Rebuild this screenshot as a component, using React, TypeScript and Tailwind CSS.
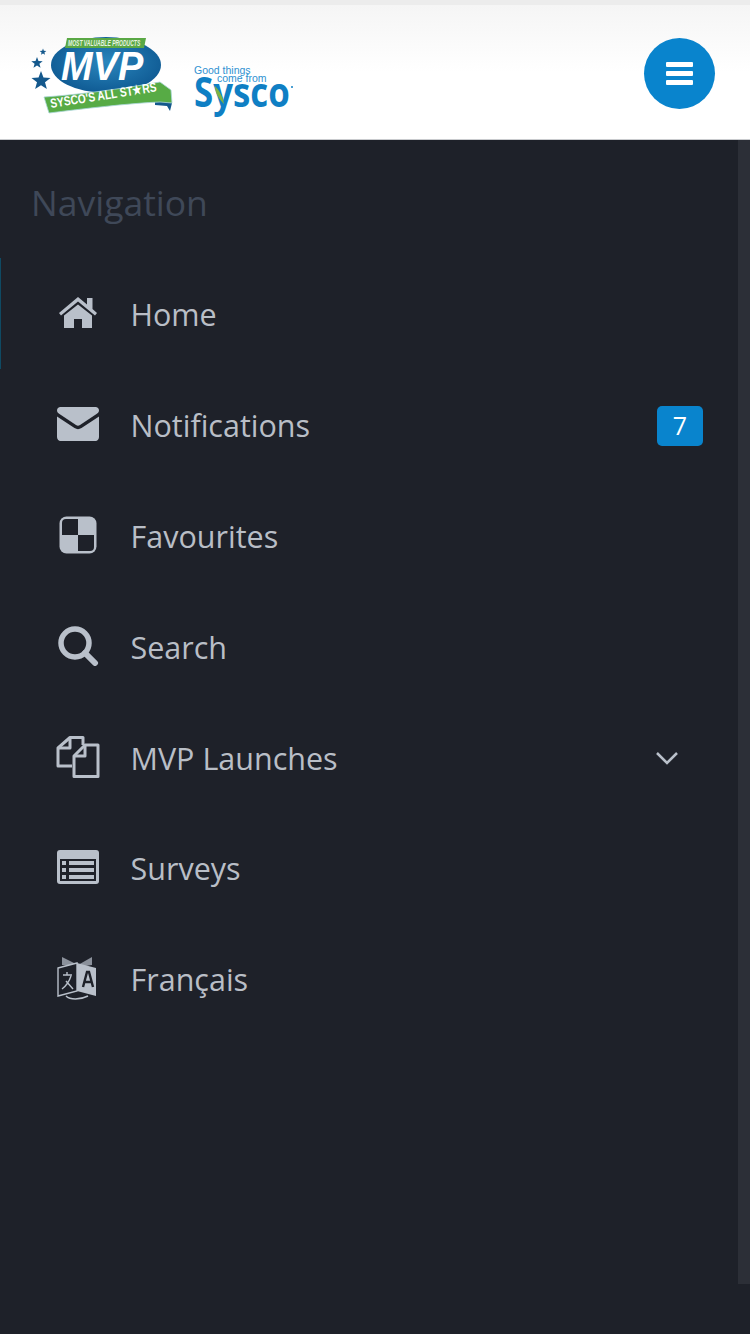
import React from "react";

const HomeIcon = () => (
  <svg width="44" height="36" viewBox="0 0 44 36" fill="#b9c0ca">
    <path d="M3 18 L22 2 L31 9.500 V3 H36.500 V14 L41 18 L39 20.500 L22 6.500 L5 20.500 Z" />
    <path d="M8 20.500 L22 9.500 L36 20.500 V33 H26 V24 H18 V33 H8 Z" />
  </svg>
);

const MailIcon = () => (
  <svg width="44" height="36" viewBox="0 0 44 36" fill="#b9c0ca">
    <path d="M1 4.500 C1 2.500 2.500 1 4.500 1 H39.500 C41.500 1 43 2.500 43 4.500 C43 6 42 7 40.500 8 L24 19 C22.700 19.900 21.300 19.900 20 19 L3.500 8 C2 7 1 6 1 4.500 Z" />
    <path d="M1 10.500 L18.500 22 C20.800 23.500 23.200 23.500 25.500 22 L43 10.500 V31 C43 33.200 41.500 35 39.500 35 H4.500 C2.500 35 1 33.200 1 31 Z" />
  </svg>
);

const TilesIcon = () => (
  <svg width="44" height="38" viewBox="0 0 44 38">
    <rect x="3.500" y="0.500" width="37" height="37" rx="7" fill="#b9c0ca" />
    <path d="M22 3 H10 Q6 3 6 7 V19 H22 Z" fill="#1e2129" />
    <path d="M22 19 H38 V31 Q38 35 34 35 H22 Z" fill="#1e2129" />
  </svg>
);

const SearchIcon = () => (
  <svg width="44" height="40" viewBox="0 0 44 40" fill="none" stroke="#b9c0ca">
    <circle cx="19" cy="17" r="14" strokeWidth="5.500" />
    <path d="M29 27 L39 37" strokeWidth="6" strokeLinecap="round" />
  </svg>
);

const PagesIcon = () => (
  <svg width="44" height="42" viewBox="0 0 44 42" fill="none" stroke="#b9c0ca" strokeWidth="3" strokeLinejoin="round">
    <path d="M16 30 H2 V12 L14 1.500 H27 V9" />
    <path d="M14 1.500 V12 H2" />
    <path d="M18 40.500 V20 L29 9 H42 V40.500 Z" />
    <path d="M29 9 V20 H18" />
  </svg>
);

const SurveyIcon = () => (
  <svg width="44" height="36" viewBox="0 0 44 36">
    <rect x="1" y="1" width="42" height="34" rx="3" fill="#b9c0ca" />
    <rect x="4" y="10" width="36" height="22" fill="#1e2129" />
    <rect x="6" y="12" width="4" height="4" fill="#b9c0ca" />
    <rect x="6" y="19" width="4" height="4" fill="#b9c0ca" />
    <rect x="6" y="26" width="4" height="4" fill="#b9c0ca" />
    <rect x="13" y="12" width="25" height="4" fill="#b9c0ca" />
    <rect x="13" y="19" width="25" height="4" fill="#b9c0ca" />
    <rect x="13" y="26" width="25" height="4" fill="#b9c0ca" />
  </svg>
);

const TranslateIcon = () => (
  <svg width="44" height="46" viewBox="0 0 44 46">
    <path d="M6 2 L22 10 L36 2 V10 L22 12 L6 10 Z" fill="#8b919b" />
    <path d="M2 13 L21 8 V36 L2 41 Z" fill="#1e2129" stroke="#b9c0ca" strokeWidth="1.400" />
    <path d="M21 8 L40 13 V41 L21 36 Z" fill="#b9c0ca" />
    <path d="M27 32 L31 17 H33 L37 32 M29 27 H35" fill="none" stroke="#1e2129" strokeWidth="2.400" />
    <path d="M7 20 H16 M11 17 V20 M15 21 C13 27 10 31 6 34 M10 26 L17 34" fill="none" stroke="#b9c0ca" strokeWidth="1.400" />
    <path d="M10 41 C14 45 24 45 32 41" fill="none" stroke="#b9c0ca" strokeWidth="1.400" />
  </svg>
);

const Star = ({ cx, cy, r }: { cx: number; cy: number; r: number }) => {
  const pts: string[] = [];
  for (let i = 0; i < 10; i++) {
    const rad = i % 2 === 0 ? r : r * 0.42;
    const a = -Math.PI / 2 + (i * Math.PI) / 5;
    pts.push(`${cx + rad * Math.cos(a)},${cy + rad * Math.sin(a)}`);
  }
  return <polygon points={pts.join(" ")} fill="#14588c" />;
};

const Logo = () => (
  <svg width="142" height="82" viewBox="0 0 142 82">
    <defs>
      <radialGradient id="oval" cx="50%" cy="45%" r="60%">
        <stop offset="0%" stopColor="#2a86bd" />
        <stop offset="100%" stopColor="#0d5790" />
      </radialGradient>
    </defs>
    <Star cx={10} cy={48} r={10} />
    <Star cx={6} cy={30} r={6} />
    <Star cx={12} cy={19} r={3.500} />
    <ellipse cx="75" cy="32" rx="55" ry="28" fill="url(#oval)" />
    <path d="M36 5 H115 L113 15 H34 Z" fill="#5aa845" />
    <text transform="translate(37 13) scale(0.59 1)" fontSize="8.500" fontWeight="700" fontStyle="italic" fill="#e8f3e2" fontFamily="'Liberation Sans', sans-serif">
      MOST VALUABLE PRODUCTS
    </text>
    <text transform="translate(30 47) scale(0.95 1)" fontSize="40" fontWeight="700" fontStyle="italic" fill="#fff" fontFamily="'Liberation Sans', sans-serif">
      MVP
    </text>
    <path d="M124 66 L141 70 L139 78 L136 73 L124 72 Z" fill="#14588c" />
    <path d="M13 64 C45 62 90 56 129 49 L140 57 L141 70 L129 69 C100 70 50 76 18 80 Z" fill="#57ab45" stroke="#a9d6d8" strokeWidth="0.800" />
    <text transform="translate(20 75) rotate(-9) scale(0.79 1)" fontSize="13" fontWeight="700" fill="#fff" fontFamily="'Liberation Sans', sans-serif">
      SYSCO'S ALL ST★RS
    </text>
  </svg>
);

const SyscoLogo = () => (
  <svg width="102" height="64" viewBox="0 0 102 64" className="-mb-[6px]">
    <text x="0" y="17" fontSize="10.500" fill="#2f91d1" fontFamily="'Liberation Sans', sans-serif">
      Good things
    </text>
    <text x="23" y="25" fontSize="10.500" fill="#2f91d1" fontFamily="'Liberation Sans', sans-serif">
      come from
    </text>
    <text transform="translate(0 50) scale(0.85 1)" fontSize="41" fontWeight="700" fill="#0f7fc4" fontFamily="'Open Sans', sans-serif">
      Sysco
    </text>
    <path d="M21 29 C25 33 29 40 30 47 C25 42 21 36 21 29 Z" fill="#7cb342" />
    <circle cx="98" cy="30" r="1" fill="#0f7fc4" />
  </svg>
);

const items = [
  { label: "Home", icon: <HomeIcon /> },
  { label: "Notifications", icon: <MailIcon /> },
  { label: "Favourites", icon: <TilesIcon /> },
  { label: "Search", icon: <SearchIcon /> },
  { label: "MVP Launches", icon: <PagesIcon /> },
  { label: "Surveys", icon: <SurveyIcon /> },
  { label: "Français", icon: <TranslateIcon /> },
];

export default function App() {
  return (
    <div className="h-[1334px] w-[750px] overflow-hidden flex flex-col bg-[#1e2129] font-['Open_Sans',sans-serif]">
      <header className="h-[140px] shrink-0 border-t-[5px] border-[#ececec] border-b border-b-[#c9cbce] bg-linear-to-b from-[#f5f5f5] to-white to-50% flex items-center justify-between pt-[2px] pl-[31px] pr-[35px]">
        <div className="flex items-end gap-[21px] mt-[2px]">
          <Logo />
          <SyscoLogo />
        </div>
        <button aria-label="open menu" className="w-[71px] h-[71px] rounded-full bg-[#0984cd] flex flex-col items-center justify-center gap-[4px]">
          <span className="block w-[27px] h-[5px] rounded-[1px] bg-white" />
          <span className="block w-[27px] h-[5px] rounded-[1px] bg-white" />
          <span className="block w-[27px] h-[5px] rounded-[1px] bg-white" />
        </button>
      </header>

      <div className="flex-1 flex">
        <div className="flex-1">
          <h2 className="h-[118px] pl-[31px] pt-[36px] text-[35.500px] leading-[52px] font-normal text-[#3f4858]">Navigation</h2>
          <nav>
            {items.map((item, i) => (
              <div
                key={item.label}
                className={
                  "h-[110.800px] flex items-center pl-[55px] pr-[35px] border-l " +
                  (i === 0 ? "border-[#0f4a63]" : "border-transparent")
                }
              >
                <span className="w-[44px] flex justify-center shrink-0">{item.icon}</span>
                <span className="ml-[30.500px] mt-[2px] flex-1 text-[30.500px] leading-[44px] text-[#b9bec6]">{item.label}</span>
                {item.label === "Notifications" && (
                  <span className="w-[46px] h-[40px] mt-[4px] rounded-[5px] bg-[#0984cd] text-white text-[25px] flex items-center justify-center">
                    7
                  </span>
                )}
                {item.label === "MVP Launches" && (
                  <svg width="24" height="14" viewBox="0 0 24 14" fill="none" stroke="#b9c0ca" strokeWidth="2.500" className="mr-[24px] mt-[3px]">
                    <path d="M2 2 L12 12 L22 2" />
                  </svg>
                )}
              </div>
            ))}
          </nav>
        </div>
        <div className="w-[12px] h-[1144px] bg-[#2c2f37]" />
      </div>
    </div>
  );
}
